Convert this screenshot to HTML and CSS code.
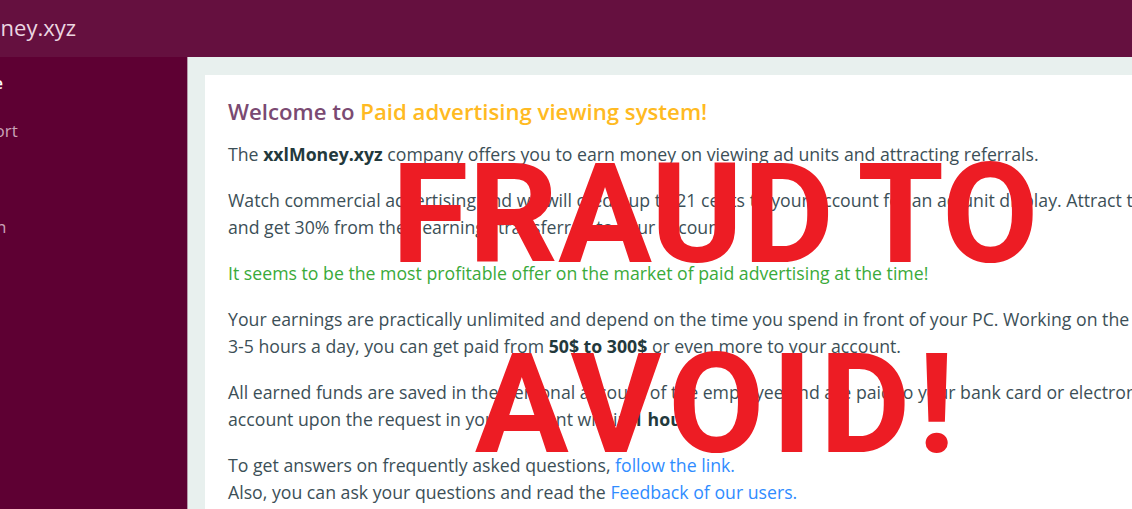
FILE: index.html
```html
<!DOCTYPE html>
<html lang="en">
<head>
    <title>xxlMoney.xyz</title>
    <link rel="stylesheet" href="styles.css">
</head>
<body>
    <div class="page">
        <header class="topbar">
            <span class="brand">xxlMoney.xyz</span>
        </header>
        <div class="layout">
            <nav class="sidebar">
                <a class="nav-item active" href="#">Home</a>
                <a class="nav-item" href="#">Support</a>
                <a class="nav-item" href="#">FAQ</a>
                <a class="nav-item" href="#">Sign in</a>
            </nav>
            <main class="content">
                <div class="card">
                    <h1>Welcome to <span class="accent">Paid advertising viewing system!</span></h1>
                    <p>The <b>xxlMoney.xyz</b> company offers you to earn money on viewing ad units and attracting referrals.</p>
                    <p>Watch commercial advertising and we will credit up to 21 cents to your account for an ad unit display. Attract them and get 30% from their earnings transferred to your account.</p>
                    <p class="green">It seems to be the most profitable offer on the market of paid advertising at the time!</p>
                    <p>Your earnings are practically unlimited and depend on the time you spend in front of your PC. Working on the site 3-5 hours a day, you can get paid from <b>50$ to 300$</b> or even more to your account.</p>
                    <p>All earned funds are saved in the personal account of the employee and are paid to your bank card or electronic account upon the request in your account within <b>1 hour</b>.</p>
                    <p>To get answers on frequently asked questions, <a href="#">follow the link.</a><br>
                    Also, you can ask your questions and read the <a href="#">Feedback of our users.</a></p>
                </div>
                <div class="stamp">
                    <span class="stamp-line">FRAUD TO</span>
                    <span class="stamp-line wide">AVOID!</span>
                </div>
            </main>
        </div>
    </div>
</body>
</html>
```

FILE: styles.css
```css
html, body {
    margin: 0;
    overflow: hidden;
}

body {
    font-family: "Open Sans", "Noto Sans", sans-serif;
    background-color: #e8f0ee;
}

.page {
    width: 1360px;
}

.topbar {
    height: 57px;
    display: flex;
    align-items: center;
    background-color: #65103f;
}

.brand {
    margin-left: -61px;
    font-size: 22px;
    color: #ecd6e1;
    margin-top: -4px;
}

.layout {
    display: flex;
    height: 452px;
}

.sidebar {
    width: 188px;
    flex-shrink: 0;
    display: flex;
    flex-direction: column;
    gap: 24px;
    padding-top: 14px;
    background-color: #5e0033;
    border-right: 1px solid #b79aab;
    box-sizing: border-box;
}

.nav-item {
    margin-left: -46px;
    font-size: 17px;
    line-height: 24px;
    color: #c9a3b8;
    text-decoration: none;
}

.nav-item.active {
    color: #fff;
    font-weight: 600;
}

.content {
    position: relative;
    flex: 1;
    padding: 18px 0 0 17px;
}

.card {
    background-color: #fff;
    padding: 22px 23px;
    height: 100%;
    box-sizing: border-box;
    color: #3c4f57;
    font-size: 17.7px;
    line-height: 27px;
    width: 990px;
}

.card h1 {
    margin: 0 0 14px;
    font-size: 22.2px;
    font-weight: 600;
    line-height: 30px;
    color: #7a4a72;
}

.card .accent {
    color: #ffba22;
}

.card p {
    margin: 0 0 19px;
}

.card b {
    color: #23393c;
}

.card .green {
    color: #3aaa3a;
}

.card a {
    color: #2f8cff;
    text-decoration: none;
}

.stamp {
    position: absolute;
    left: 177px;
    top: 62px;
    width: 700px;
    text-align: center;
    font-family: Roboto, "Open Sans", sans-serif;
    font-size: 140px;
    font-weight: 700;
    line-height: 190px;
    color: #ed1c24;
}

.stamp-line {
    display: block;
    word-spacing: -8px;
}

.stamp-line.wide {
    letter-spacing: 7px;
    margin-right: -7px;
}
```
